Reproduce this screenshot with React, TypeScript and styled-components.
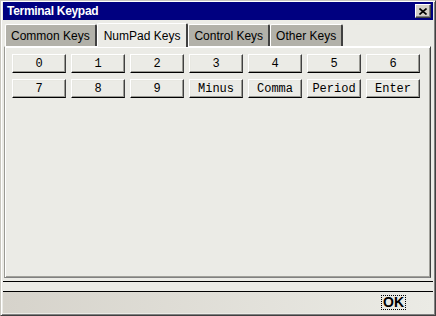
import styled, { createGlobalStyle } from "styled-components";

const GlobalStyle = createGlobalStyle`
  html, body {
    margin: 0;
    padding: 0;
    background: #ebebe6;
  }
`;

const Window = styled.div`
  width: 436px;
  height: 316px;
  box-sizing: border-box;
  background: #ebebe6;
  border: 1px solid;
  border-color: #c8c6be #404040 #404040 #c8c6be;
  box-shadow: inset 1px 1px #ffffff, inset -1px -1px #808080;
  padding: 1px 2px 2px 2px;
  display: flex;
  flex-direction: column;
`;

const TitleBar = styled.div`
  height: 18px;
  flex-shrink: 0;
  background: #000080;
  display: flex;
  align-items: center;
  justify-content: space-between;
  padding: 0 2px 0 4px;
`;

const Title = styled.span`
  color: #ffffff;
  font-family: "Liberation Sans", Arial, sans-serif;
  font-weight: bold;
  font-size: 12px;
  letter-spacing: -0.3px;
`;

const CloseButton = styled.div`
  width: 16px;
  height: 14px;
  box-sizing: border-box;
  background: #d4d0c8;
  border: 1px solid;
  border-color: #ffffff #404040 #404040 #ffffff;
  box-shadow: inset -1px -1px #808080;
  display: flex;
  align-items: center;
  justify-content: center;
`;

const Body = styled.div`
  flex: 1;
  display: flex;
  flex-direction: column;
  padding: 3px 0 0 0;
`;

const TabStrip = styled.div`
  display: flex;
  align-items: flex-end;
  height: 24px;
  padding-left: 2px;
  position: relative;
  z-index: 1;
  margin-bottom: -1px;
`;

const Tab = styled.div<{ $active?: boolean }>`
  box-sizing: border-box;
  height: ${(p) => (p.$active ? 24 : 22)}px;
  margin-bottom: ${(p) => (p.$active ? 0 : 1)}px;
  padding: 0 ${(p) => (p.$active ? 6 : 5)}px;
  display: flex;
  align-items: center;
  background: ${(p) => (p.$active ? "#ebebe6" : "#b2b1a9")};
  border-top: 1px solid #ffffff;
  border-left: 1px solid #ffffff;
  border-right: 2px solid;
  border-right-color: #404040;
  border-top-left-radius: 2px;
  border-top-right-radius: 2px;
  font-family: "Liberation Sans", Arial, sans-serif;
  font-size: 12px;
  color: #000000;
`;

const Panel = styled.div`
  flex: 1;
  margin: 0 2px 1px 1px;
  box-sizing: border-box;
  border: 1px solid;
  border-color: #ffffff #404040 #808080 #9a9a94;
  box-shadow: inset 1px 1px #ffffff, inset -1px -1px #a0a09a;
  padding: 7px 6px 6px 7px;
`;

const KeyGrid = styled.div`
  display: grid;
  grid-template-columns: repeat(7, 54px);
  grid-auto-rows: 19px;
  column-gap: 5px;
  row-gap: 6px;
`;

const KeyButton = styled.button`
  box-sizing: border-box;
  margin: 0;
  padding: 0;
  background: #ebebe6;
  border: 1px solid;
  border-color: #ffffff #404040 #000000 #ffffff;
  box-shadow: inset -1px -1px #9a9a94, inset 1px 1px #e8e8e2;
  font-family: "Liberation Mono", "Courier New", monospace;
  font-size: 12px;
  color: #000000;
  display: flex;
  align-items: center;
  justify-content: center;
`;

const Divider = styled.div`
  margin-top: 2px;
  height: 9px;
  border-top: 1px solid #000000;
  border-bottom: 1px solid #000000;
  background: #ebebe6;
`;

const Footer = styled.div`
  height: 21px;
  display: flex;
  align-items: center;
  justify-content: flex-end;
  padding-right: 27px;
  background: linear-gradient(to right, #d6d3cb, #ebebe5);
`;

const OkButton = styled.div`
  border: 1px dotted #000000;
  padding: 0 1px;
  font-family: "Liberation Sans", Arial, sans-serif;
  font-weight: bold;
  font-size: 14px;
  line-height: 13px;
  color: #000000;
`;

const tabs = ["Common Keys", "NumPad Keys", "Control Keys", "Other Keys"];
const keys = [
  "0", "1", "2", "3", "4", "5", "6",
  "7", "8", "9", "Minus", "Comma", "Period", "Enter",
];

export default function App() {
  return (
    <>
      <GlobalStyle />
      <Window>
        <TitleBar>
          <Title>Terminal Keypad</Title>
          <CloseButton>
            <svg width="8" height="7" viewBox="0 0 8 7">
              <path d="M0.5 0.5 L7.5 6.5 M7.5 0.5 L0.5 6.5" stroke="#000" strokeWidth="1.6" />
            </svg>
          </CloseButton>
        </TitleBar>
        <Body>
          <TabStrip>
            {tabs.map((t) => (
              <Tab key={t} $active={t === "NumPad Keys"}>
                {t}
              </Tab>
            ))}
          </TabStrip>
          <Panel>
            <KeyGrid>
              {keys.map((k) => (
                <KeyButton key={k}>{k}</KeyButton>
              ))}
            </KeyGrid>
          </Panel>
          <Divider />
          <Footer>
            <OkButton>OK</OkButton>
          </Footer>
        </Body>
      </Window>
    </>
  );
}
